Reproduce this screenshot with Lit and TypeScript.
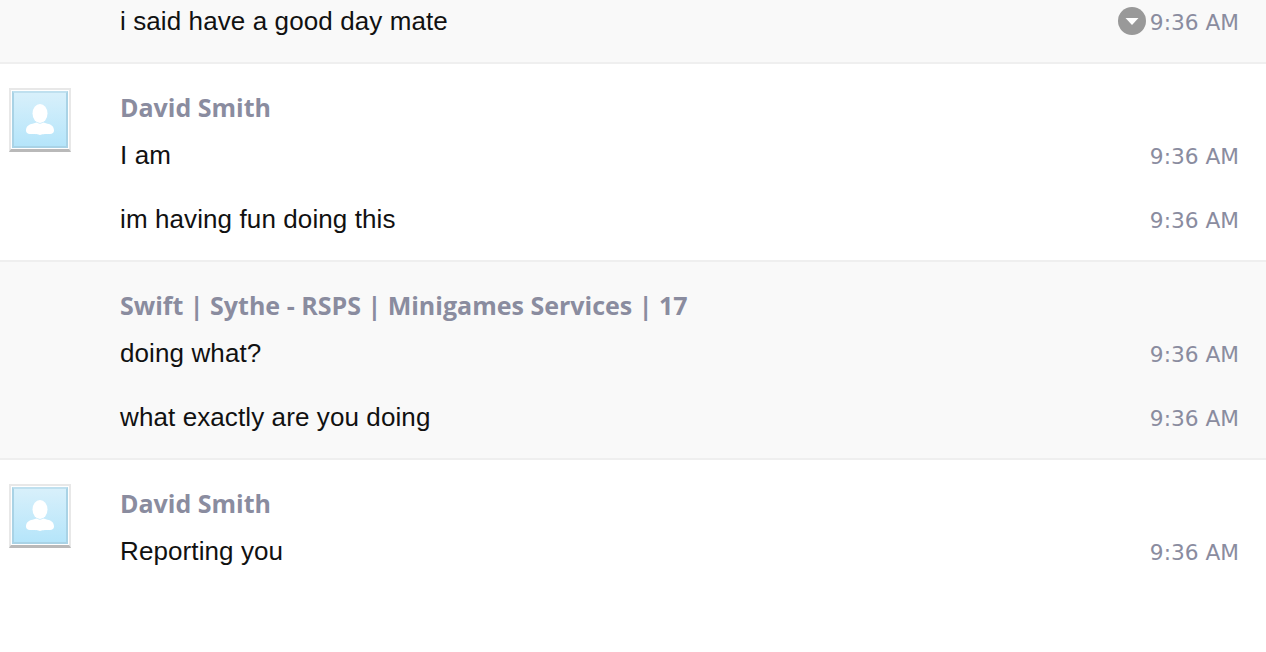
import { LitElement, html, css, svg } from 'lit';
import { customElement, property } from 'lit/decorators.js';

type Message = { text: string; time: string; menu?: boolean };
type Group = { name?: string; avatar?: boolean; shaded?: boolean; messages: Message[]; clipped?: boolean };

const groups: Group[] = [
  {
    shaded: true,
    clipped: true,
    messages: [{ text: 'i said have a good day mate', time: '9:36 AM', menu: true }],
  },
  {
    name: 'David Smith',
    avatar: true,
    messages: [
      { text: 'I am', time: '9:36 AM' },
      { text: 'im having fun doing this', time: '9:36 AM' },
    ],
  },
  {
    name: 'Swift | Sythe - RSPS | Minigames Services | 17',
    shaded: true,
    messages: [
      { text: 'doing what?', time: '9:36 AM' },
      { text: 'what exactly are you doing', time: '9:36 AM' },
    ],
  },
  {
    name: 'David Smith',
    avatar: true,
    messages: [{ text: 'Reporting you', time: '9:36 AM' }],
  },
];

@customElement('chat-avatar')
export class ChatAvatar extends LitElement {
  static styles = css`
    :host {
      position: absolute;
      left: 9px;
      top: 24px;
      display: block;
      width: 62px;
      height: 64px;
      box-sizing: border-box;
      padding: 1px;
      background: #fff;
      border: 2px solid #e8e8e8;
      border-bottom: 3px solid #b9b9b9;
    }
    .pic {
      display: block;
      width: 100%;
      height: 100%;
      box-sizing: border-box;
      border: 2px solid #a9d3e6;
      border-top-color: #bfe0ef;
      background: linear-gradient(#d8f0fb, #b5e5fa);
    }
    svg {
      display: block;
      width: 100%;
      height: 100%;
    }
  `;

  render() {
    return html`<div class="pic">
      <svg viewBox="0 0 52 53">
        ${svg`<ellipse cx="26" cy="20.500" rx="7.500" ry="9.500" fill="#fff" />
          <path d="M12 37.500c0-4 2.500-6 6.500-6.800l4-1.200c2 1.500 5 1.500 7 0l4 1.200c4 .8 6.500 2.800 6.500 6.800 0 2-1.500 3.500-4 3.500-5.500 0-8 .2-10 1-2-.8-4.500-1-10-1-2.500 0-4-1.500-4-3.500z" fill="#fff" />`}
      </svg>
    </div>`;
  }
}

@customElement('chat-row')
export class ChatRow extends LitElement {
  @property({ type: String }) text = '';
  @property({ type: String }) time = '';
  @property({ type: Boolean }) menu = false;

  static styles = css`
    :host {
      display: flex;
      align-items: center;
      justify-content: space-between;
      height: 36px;
    }
    .text {
      font-family: 'Liberation Sans', Arial, sans-serif;
      font-size: 26px;
      letter-spacing: 0.1px;
      color: #111;
    }
    .side {
      display: flex;
      align-items: center;
      gap: 4px;
    }
    .time {
      padding-top: 2px;
      font-family: 'DejaVu Sans', sans-serif;
      font-size: 21.700px;
      color: #8a8c9f;
    }
    .menu {
      display: block;
      width: 28px;
      height: 28px;
    }
  `;

  render() {
    return html`
      <span class="text">${this.text}</span>
      <span class="side">
        ${this.menu
          ? html`<svg class="menu" viewBox="0 0 28 28">
              <circle cx="14" cy="14" r="14" fill="#999" />
              <path d="M7.500 11h13l-6.500 7z" fill="#fff" />
            </svg>`
          : ''}
        <span class="time">${this.time}</span>
      </span>
    `;
  }
}

@customElement('app-root')
export class AppRoot extends LitElement {
  static styles = css`
    :host {
      display: block;
      height: 652px;
      overflow: hidden;
      background: #fff;
    }
    .group {
      position: relative;
      box-sizing: border-box;
      padding: 25px 27px 23px 120px;
      border-bottom: 2px solid #efefef;
    }
    .group:last-child {
      border-bottom: none;
    }
    .shaded {
      background: #f9f9f9;
    }
    .clipped {
      padding-top: 3px;
    }
    .name {
      display: block;
      height: 36px;
      line-height: 36px;
      font-family: 'Open Sans', sans-serif;
      font-size: 25px;
      font-weight: 700;
      color: #8a8c9f;
      white-space: nowrap;
    }
    .list {
      display: flex;
      flex-direction: column;
      gap: 28px;
      margin-top: 12px;
    }
    .clipped .list {
      margin-top: 0;
    }
  `;

  render() {
    return html`${groups.map(
      (g) => html`<section class="group ${g.shaded ? 'shaded' : ''} ${g.clipped ? 'clipped' : ''}">
        ${g.avatar ? html`<chat-avatar></chat-avatar>` : ''}
        ${g.name ? html`<span class="name">${g.name}</span>` : ''}
        <div class="list">
          ${g.messages.map(
            (m) => html`<chat-row .text=${m.text} .time=${m.time} ?menu=${m.menu}></chat-row>`
          )}
        </div>
      </section>`
    )}`;
  }
}
